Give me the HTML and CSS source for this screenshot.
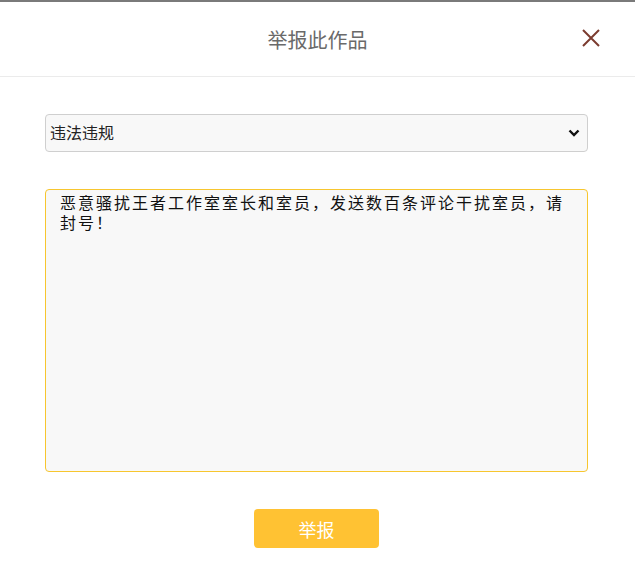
FILE: index.html
```html
<!DOCTYPE html>
<html lang="zh-CN">
<head>
  <meta charset="UTF-8">
  <title>举报此作品</title>
  <link rel="stylesheet" href="styles.css">
</head>
<body>
  <div class="dialog">
    <div class="dialog-head">
      <span class="dialog-title">举报此作品</span>
      <button class="close-btn" aria-label="关闭">
        <svg width="20" height="20" viewBox="0 0 20 20"><path d="M2 2L18 18M18 2L2 18" stroke="#7b3b2f" stroke-width="2" fill="none"/></svg>
      </button>
    </div>
    <div class="dialog-body">
      <div class="select-wrap">
        <select class="reason">
          <option>违法违规</option>
          <option>色情低俗</option>
          <option>抄袭侵权</option>
        </select>
        <svg class="arrow" width="12" height="8" viewBox="0 0 12 8"><path d="M1.5 1.5L6 6L10.5 1.5" stroke="#111" stroke-width="2.4" fill="none"/></svg>
      </div>
      <textarea class="detail">恶意骚扰王者工作室室长和室员，发送数百条评论干扰室员，请封号！</textarea>
      <button class="submit-btn">举报</button>
    </div>
  </div>
</body>
</html>
```

FILE: styles.css
```css
body { margin: 0; font-family: "Liberation Sans", "Noto Sans CJK SC", sans-serif; background: #fff; }
.dialog { border-top: 2px solid #7a7a7a; }
.dialog-head { position: relative; height: 74px; border-bottom: 1px solid #ebebeb; display: flex; justify-content: center; align-items: center; }
.dialog-title { font-size: 20px; color: #6a6a6a; }
.close-btn { position: absolute; right: 34px; top: 26px; border: none; background: none; padding: 0; cursor: pointer; }
.dialog-body { padding: 37px 47px 0 45px; display: flex; flex-direction: column; align-items: center; }
.select-wrap { position: relative; width: 100%; }
.reason { display: block; width: 100%; height: 38px; box-sizing: border-box; border: 1px solid #cfcfcf; border-radius: 4px; background: #f8f8f8; font-size: 16px; color: #222; padding: 0 4px; appearance: none; font-family: "Liberation Sans", "Noto Sans CJK SC", sans-serif; }
.arrow { position: absolute; right: 8px; top: 15px; pointer-events: none; }
.detail { width: 100%; height: 283px; box-sizing: border-box; margin-top: 37px; border: 1px solid #f7c62f; border-radius: 4px; background: #f8f8f8; padding: 5px 14px; font-size: 16px; letter-spacing: 2px; line-height: 20px; color: #111; resize: none; font-family: "Liberation Mono", "Noto Sans CJK SC", monospace; outline: none; }
.submit-btn { margin-top: 37px; width: 125px; height: 39px; border: none; border-radius: 4px; background: #ffc233; color: #fff; font-size: 18px; cursor: pointer; font-family: "Liberation Sans", "Noto Sans CJK SC", sans-serif; }
```
